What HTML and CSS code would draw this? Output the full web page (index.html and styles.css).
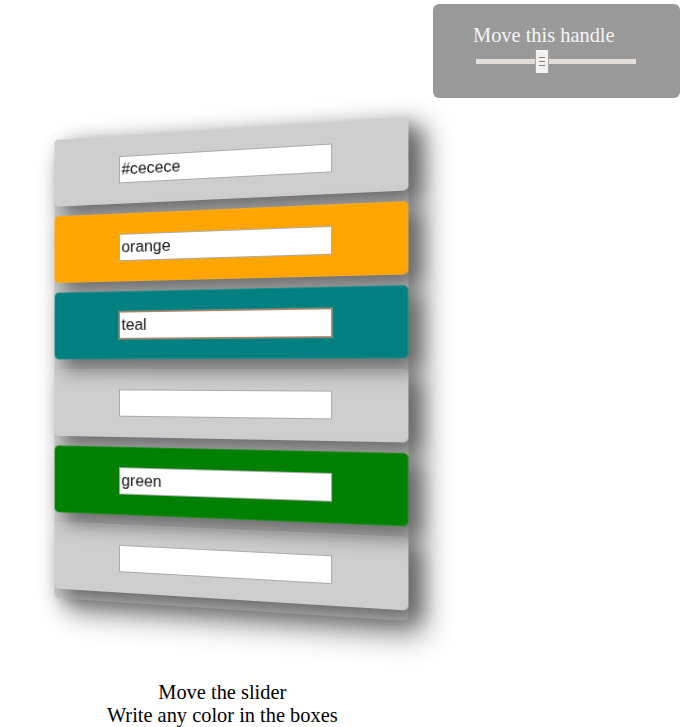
FILE: index.html
```html
<!DOCTYPE html>
<html lang="en">
<head>
<meta charset="utf-8">
<title>Color boxes</title>
<link rel="stylesheet" href="styles.css">
</head>
<body>
<header class="control">
  <label class="control-label">Move this handle</label>
  <div class="slider">
    <div class="track"></div>
    <div class="handle"><i></i><i></i><i></i></div>
    <div class="track track-rest"></div>
  </div>
</header>
<main class="scene">
  <div class="panel">
    <div class="row silver"><div class="field">#cecece</div></div>
    <div class="row orange"><div class="field">orange</div></div>
    <div class="row teal"><div class="field focused">teal</div></div>
    <div class="row"><div class="field"></div></div>
    <div class="row green"><div class="field">green</div></div>
    <div class="row"><div class="field"></div></div>
  </div>
</main>
<footer class="notes">
  <p>Move the slider</p>
  <p>Write any color in the boxes</p>
</footer>
</body>
</html>
```
FILE: styles.css
```css
* { box-sizing: border-box; }
body {
  margin: 0;
  height: 727px;
  overflow: hidden;
  padding-top: 4px;
  background: #fff;
  font: 20.4px/23px "Liberation Serif", serif;
  color: #000;
}
.control {
  width: 247px;
  height: 94px;
  margin-left: 433px;
  padding: 20px 40px 0;
  border-radius: 6px;
  background: #999;
  color: #f5f5f5;
}
.control-label { display: block; white-space: nowrap; }
.slider {
  display: flex;
  align-items: center;
  width: 160px;
  height: 23px;
  margin: 3px 0 0 3px;
}
.track { width: 59px; height: 5px; background: #e2ddd8; }
.track-rest { flex: 1; }
.handle {
  display: flex;
  flex-direction: column;
  align-items: center;
  justify-content: center;
  gap: 3px;
  width: 14px;
  height: 23px;
  border: 1px solid #aaa39e;
  border-width: 0 1px;
  background: #f3f1ef;
}
.handle i { width: 6px; height: 1px; background: #857f7b; }
.scene {
  width: 360px;
  height: 480px;
  margin: 31px 0 0 42.8px;
  perspective: 730px;
}
.panel {
  width: 360px;
  height: 480px;
  border-radius: 5px;
  background: #cecece;
  box-shadow: 12px 12px 30px #888;
  transform: rotateY(-11.2deg);
}
.row {
  display: flex;
  align-items: center;
  justify-content: center;
  height: 70px;
  margin-bottom: 10px;
  padding-right: 1.5px;
  border: 1px solid rgba(206, 206, 206, .15);
  border-radius: 5px;
  box-shadow: 10px 10px 20px #666;
}
.silver { background: #cecece; }
.orange { background: orange; }
.teal { background: teal; }
.green { background: green; }
.field {
  width: 216.5px;
  height: 28px;
  padding-left: 1.5px;
  border: 1px solid #aaa;
  background: #fff;
  font: 16.8px/26px "Liberation Sans", sans-serif;
  color: #111;
}
.focused { border-color: #c47f5d; outline: 1px solid #d99a7c80; }
.notes {
  width: 400px;
  margin: 72px 0 0 22.3px;
  text-align: center;
}
.notes p { margin: 0; }
```
